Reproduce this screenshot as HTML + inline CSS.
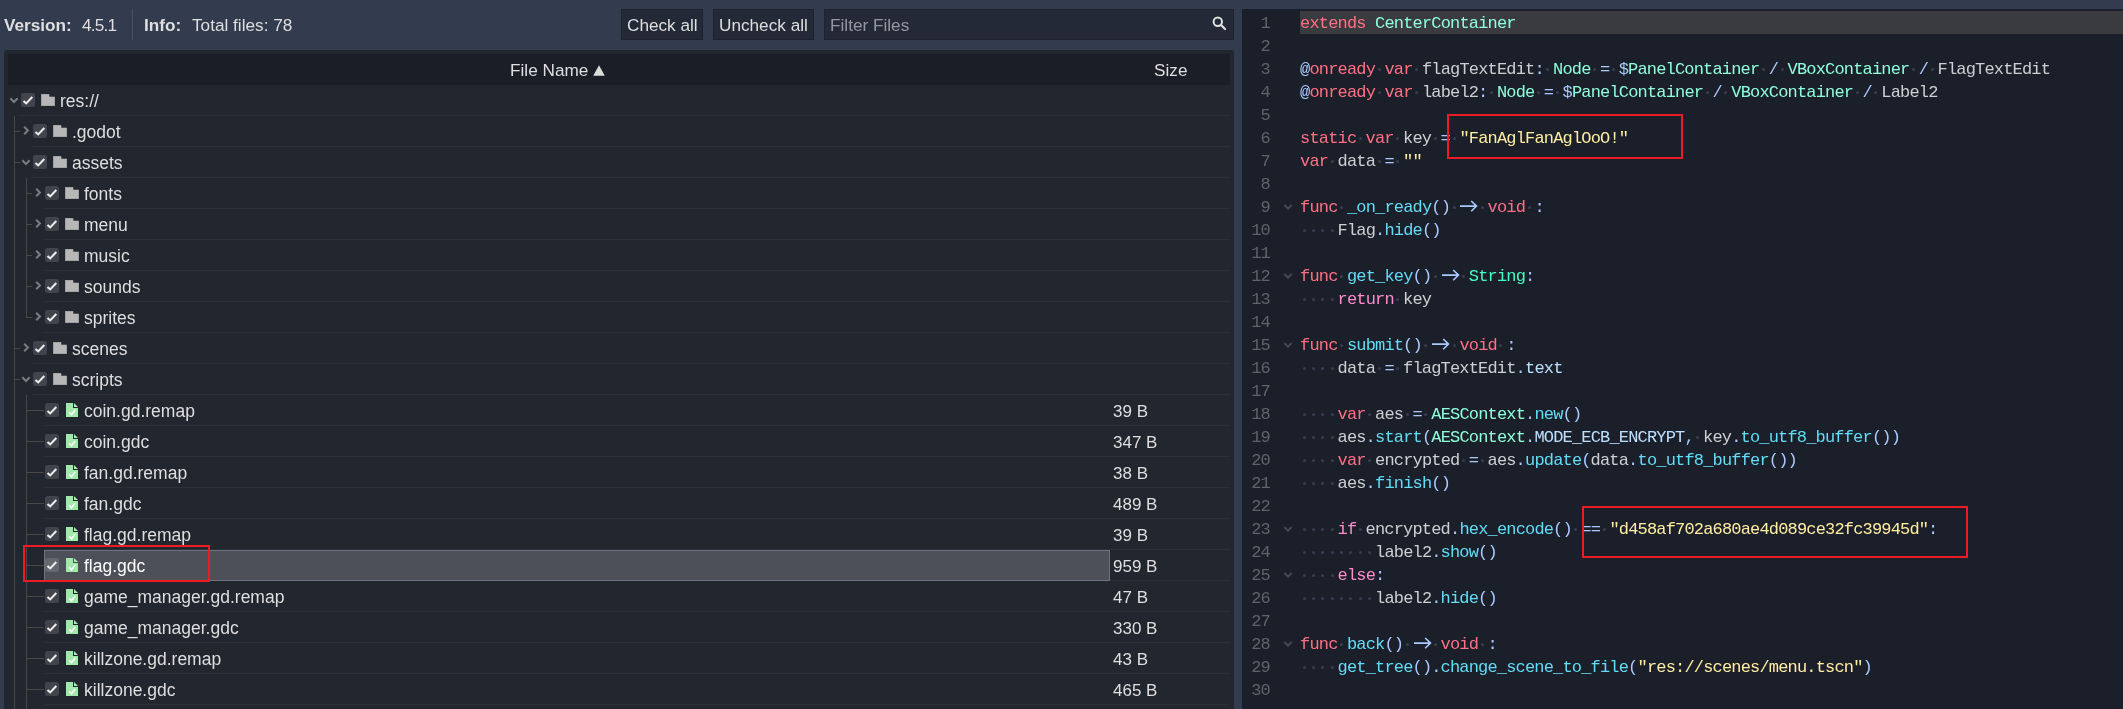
<!DOCTYPE html>
<html><head><meta charset="utf-8">
<style>
html,body{margin:0;padding:0;-webkit-font-smoothing:antialiased;}
body{width:2123px;height:709px;overflow:hidden;position:relative;background:#333b4f;font-family:"Liberation Sans", sans-serif;font-size:17.2px;color:#dfdfdf;}
div,span,svg,i{position:absolute;}
.top{top:5px;height:40px;line-height:40px;white-space:pre;will-change:transform;}
.b{font-weight:bold;}
.btn{top:9px;height:31px;background:#242938;box-sizing:border-box;border:1px solid #1f2330;}
.btn span{position:absolute;top:1px;line-height:29px;white-space:pre;will-change:transform;}
#tree{left:4px;top:50px;width:1230px;height:700px;background:#22262f;border-radius:3px;}
#head{left:8px;top:54px;width:1222px;height:31px;background:#1b1e27;}
.hd{top:55px;line-height:31px;white-space:pre;will-change:transform;}
.sep{height:1px;background:#2b2f37;}
.rl{background:#4a4844;}
.cb{width:14px;height:14px;border-radius:2.5px;background:rgba(255,255,255,0.14);}
.cb svg{left:0;top:0;}
.tt{line-height:31px;white-space:pre;font-size:17.5px;}
.sel-t{color:#fff;}
.sel{left:44px;width:1066px;height:31px;box-sizing:border-box;border:1px solid #6b7383;background:#4d5059;}
.red{box-sizing:border-box;border:2px solid #ed1c24;}
#txt{left:0;top:0;width:2123px;height:709px;will-change:transform;}
#ed{left:1242px;top:9px;width:881px;height:700px;background:#1b1f2a;}
#cur{left:1300px;top:11px;width:823px;height:23px;background:#3a3b3f;}
.ln{left:1240px;width:30px;text-align:right;height:23px;line-height:23px;font-family:"Liberation Mono", monospace;font-size:17px;letter-spacing:-0.826px;color:#5f6269;}
.fold{left:1283px;}
.c{line-height:23px;height:23px;white-space:pre;font-family:"Liberation Mono", monospace;font-size:17px;letter-spacing:-0.826px;}
.d{width:3px;height:3px;background:#363e51;border-radius:1.5px;}
</style></head><body>
<div class="top b" style="left:4px">Version:</div>
<div class="top" style="left:82px;letter-spacing:-0.8px">4.5.1</div>
<div style="left:132px;top:9px;width:1px;height:31px;background:#4a5063"></div>
<div class="top b" style="left:144px">Info:</div>
<div class="top" style="left:192px">Total files: 78</div>
<div class="btn" style="left:621px;width:82px"><span style="left:4.6px">Check all</span></div>
<div class="btn" style="left:713px;width:101px"><span style="left:5px">Uncheck all</span></div>
<div class="btn" style="left:824px;width:410px"><span style="left:5px;color:#95979e">Filter Files</span>
<svg style="left:386px;top:5px" width="16" height="16" viewBox="0 0 16 16"><circle cx="6.8" cy="6.8" r="4.2" fill="none" stroke="#e0e0e0" stroke-width="2"/><path d="M9.8 9.8 L14 14" stroke="#e0e0e0" stroke-width="2.2" stroke-linecap="round"/></svg></div>
<div id="tree"></div>
<div id="head"></div>
<div class="hd" style="left:510px">File Name</div>
<svg style="left:593px;top:65px" width="12" height="11" viewBox="0 0 12 11"><path d="M6 0.3 L11.8 10.8 H0.2 Z" fill="#dcdcdc"/></svg>
<div class="hd" style="left:1154px">Size</div>
<div class="rl" style="left:14px;top:116px;width:1px;height:593px"></div><div class="rl" style="left:26px;top:178px;width:1px;height:140px"></div><div class="rl" style="left:26px;top:395px;width:1px;height:314px"></div><div class="sep" style="left:20px;top:115px;width:1210px"></div><svg class="ico" style="left:9px;top:94px" width="10" height="12" viewBox="0 0 10 12"><path d="M1.3 4.2 L5 7.9 L8.7 4.2" fill="none" stroke="#777b82" stroke-width="2.1"/></svg><div class="cb" style="left:21px;top:93px"><svg width="14" height="14" viewBox="0 0 14 14"><path d="M2.5 7.9 L5.2 10.4 L11.3 4.1" fill="none" stroke="#ececec" stroke-width="2.1"/></svg></div><svg class="ico" style="left:41px;top:94px" width="14" height="12" viewBox="0 0 14 12"><path d="M0.3 0.3 H8 V3 H13.7 V11.7 H0.3 Z" fill="#b7b7b7" stroke="#b7b7b7" stroke-width="0.6" stroke-linejoin="round"/></svg><div class="sep" style="left:32px;top:146px;width:1198px"></div><div class="rl" style="left:14px;top:131px;width:6px;height:1px"></div><svg class="ico" style="left:22px;top:125px" width="8" height="12" viewBox="0 0 8 12"><path d="M2.2 1.8 L5.9 5.5 L2.2 9.2" fill="none" stroke="#777b82" stroke-width="2.1"/></svg><div class="cb" style="left:33px;top:124px"><svg width="14" height="14" viewBox="0 0 14 14"><path d="M2.5 7.9 L5.2 10.4 L11.3 4.1" fill="none" stroke="#ececec" stroke-width="2.1"/></svg></div><svg class="ico" style="left:53px;top:125px" width="14" height="12" viewBox="0 0 14 12"><path d="M0.3 0.3 H8 V3 H13.7 V11.7 H0.3 Z" fill="#b7b7b7" stroke="#b7b7b7" stroke-width="0.6" stroke-linejoin="round"/></svg><div class="sep" style="left:32px;top:177px;width:1198px"></div><div class="rl" style="left:14px;top:162px;width:6px;height:1px"></div><svg class="ico" style="left:21px;top:156px" width="10" height="12" viewBox="0 0 10 12"><path d="M1.3 4.2 L5 7.9 L8.7 4.2" fill="none" stroke="#777b82" stroke-width="2.1"/></svg><div class="cb" style="left:33px;top:155px"><svg width="14" height="14" viewBox="0 0 14 14"><path d="M2.5 7.9 L5.2 10.4 L11.3 4.1" fill="none" stroke="#ececec" stroke-width="2.1"/></svg></div><svg class="ico" style="left:53px;top:156px" width="14" height="12" viewBox="0 0 14 12"><path d="M0.3 0.3 H8 V3 H13.7 V11.7 H0.3 Z" fill="#b7b7b7" stroke="#b7b7b7" stroke-width="0.6" stroke-linejoin="round"/></svg><div class="sep" style="left:44px;top:208px;width:1186px"></div><div class="rl" style="left:26px;top:193px;width:6px;height:1px"></div><svg class="ico" style="left:34px;top:187px" width="8" height="12" viewBox="0 0 8 12"><path d="M2.2 1.8 L5.9 5.5 L2.2 9.2" fill="none" stroke="#777b82" stroke-width="2.1"/></svg><div class="cb" style="left:45px;top:186px"><svg width="14" height="14" viewBox="0 0 14 14"><path d="M2.5 7.9 L5.2 10.4 L11.3 4.1" fill="none" stroke="#ececec" stroke-width="2.1"/></svg></div><svg class="ico" style="left:65px;top:187px" width="14" height="12" viewBox="0 0 14 12"><path d="M0.3 0.3 H8 V3 H13.7 V11.7 H0.3 Z" fill="#b7b7b7" stroke="#b7b7b7" stroke-width="0.6" stroke-linejoin="round"/></svg><div class="sep" style="left:44px;top:239px;width:1186px"></div><div class="rl" style="left:26px;top:224px;width:6px;height:1px"></div><svg class="ico" style="left:34px;top:218px" width="8" height="12" viewBox="0 0 8 12"><path d="M2.2 1.8 L5.9 5.5 L2.2 9.2" fill="none" stroke="#777b82" stroke-width="2.1"/></svg><div class="cb" style="left:45px;top:217px"><svg width="14" height="14" viewBox="0 0 14 14"><path d="M2.5 7.9 L5.2 10.4 L11.3 4.1" fill="none" stroke="#ececec" stroke-width="2.1"/></svg></div><svg class="ico" style="left:65px;top:218px" width="14" height="12" viewBox="0 0 14 12"><path d="M0.3 0.3 H8 V3 H13.7 V11.7 H0.3 Z" fill="#b7b7b7" stroke="#b7b7b7" stroke-width="0.6" stroke-linejoin="round"/></svg><div class="sep" style="left:44px;top:270px;width:1186px"></div><div class="rl" style="left:26px;top:255px;width:6px;height:1px"></div><svg class="ico" style="left:34px;top:249px" width="8" height="12" viewBox="0 0 8 12"><path d="M2.2 1.8 L5.9 5.5 L2.2 9.2" fill="none" stroke="#777b82" stroke-width="2.1"/></svg><div class="cb" style="left:45px;top:248px"><svg width="14" height="14" viewBox="0 0 14 14"><path d="M2.5 7.9 L5.2 10.4 L11.3 4.1" fill="none" stroke="#ececec" stroke-width="2.1"/></svg></div><svg class="ico" style="left:65px;top:249px" width="14" height="12" viewBox="0 0 14 12"><path d="M0.3 0.3 H8 V3 H13.7 V11.7 H0.3 Z" fill="#b7b7b7" stroke="#b7b7b7" stroke-width="0.6" stroke-linejoin="round"/></svg><div class="sep" style="left:44px;top:301px;width:1186px"></div><div class="rl" style="left:26px;top:286px;width:6px;height:1px"></div><svg class="ico" style="left:34px;top:280px" width="8" height="12" viewBox="0 0 8 12"><path d="M2.2 1.8 L5.9 5.5 L2.2 9.2" fill="none" stroke="#777b82" stroke-width="2.1"/></svg><div class="cb" style="left:45px;top:279px"><svg width="14" height="14" viewBox="0 0 14 14"><path d="M2.5 7.9 L5.2 10.4 L11.3 4.1" fill="none" stroke="#ececec" stroke-width="2.1"/></svg></div><svg class="ico" style="left:65px;top:280px" width="14" height="12" viewBox="0 0 14 12"><path d="M0.3 0.3 H8 V3 H13.7 V11.7 H0.3 Z" fill="#b7b7b7" stroke="#b7b7b7" stroke-width="0.6" stroke-linejoin="round"/></svg><div class="sep" style="left:44px;top:332px;width:1186px"></div><div class="rl" style="left:26px;top:317px;width:6px;height:1px"></div><svg class="ico" style="left:34px;top:311px" width="8" height="12" viewBox="0 0 8 12"><path d="M2.2 1.8 L5.9 5.5 L2.2 9.2" fill="none" stroke="#777b82" stroke-width="2.1"/></svg><div class="cb" style="left:45px;top:310px"><svg width="14" height="14" viewBox="0 0 14 14"><path d="M2.5 7.9 L5.2 10.4 L11.3 4.1" fill="none" stroke="#ececec" stroke-width="2.1"/></svg></div><svg class="ico" style="left:65px;top:311px" width="14" height="12" viewBox="0 0 14 12"><path d="M0.3 0.3 H8 V3 H13.7 V11.7 H0.3 Z" fill="#b7b7b7" stroke="#b7b7b7" stroke-width="0.6" stroke-linejoin="round"/></svg><div class="sep" style="left:32px;top:363px;width:1198px"></div><div class="rl" style="left:14px;top:348px;width:6px;height:1px"></div><svg class="ico" style="left:22px;top:342px" width="8" height="12" viewBox="0 0 8 12"><path d="M2.2 1.8 L5.9 5.5 L2.2 9.2" fill="none" stroke="#777b82" stroke-width="2.1"/></svg><div class="cb" style="left:33px;top:341px"><svg width="14" height="14" viewBox="0 0 14 14"><path d="M2.5 7.9 L5.2 10.4 L11.3 4.1" fill="none" stroke="#ececec" stroke-width="2.1"/></svg></div><svg class="ico" style="left:53px;top:342px" width="14" height="12" viewBox="0 0 14 12"><path d="M0.3 0.3 H8 V3 H13.7 V11.7 H0.3 Z" fill="#b7b7b7" stroke="#b7b7b7" stroke-width="0.6" stroke-linejoin="round"/></svg><div class="sep" style="left:32px;top:394px;width:1198px"></div><div class="rl" style="left:14px;top:379px;width:6px;height:1px"></div><svg class="ico" style="left:21px;top:373px" width="10" height="12" viewBox="0 0 10 12"><path d="M1.3 4.2 L5 7.9 L8.7 4.2" fill="none" stroke="#777b82" stroke-width="2.1"/></svg><div class="cb" style="left:33px;top:372px"><svg width="14" height="14" viewBox="0 0 14 14"><path d="M2.5 7.9 L5.2 10.4 L11.3 4.1" fill="none" stroke="#ececec" stroke-width="2.1"/></svg></div><svg class="ico" style="left:53px;top:373px" width="14" height="12" viewBox="0 0 14 12"><path d="M0.3 0.3 H8 V3 H13.7 V11.7 H0.3 Z" fill="#b7b7b7" stroke="#b7b7b7" stroke-width="0.6" stroke-linejoin="round"/></svg><div class="sep" style="left:44px;top:425px;width:1186px"></div><div class="rl" style="left:26px;top:410px;width:18px;height:1px"></div><div class="cb" style="left:45px;top:403px"><svg width="14" height="14" viewBox="0 0 14 14"><path d="M2.5 7.9 L5.2 10.4 L11.3 4.1" fill="none" stroke="#ececec" stroke-width="2.1"/></svg></div><svg class="ico" style="left:66px;top:403px" width="12" height="14" viewBox="0 0 12 14"><path d="M0 0 H7 V5 H12 V14 H0 Z" fill="#9feaaa"/><path d="M8 0 L12 4 H8 Z" fill="#a6eeb1"/><path d="M3.2 9.3 L5.4 11.8 L9.2 7" fill="none" stroke="#fff" stroke-width="1.6"/></svg><div class="sep" style="left:44px;top:456px;width:1186px"></div><div class="rl" style="left:26px;top:441px;width:18px;height:1px"></div><div class="cb" style="left:45px;top:434px"><svg width="14" height="14" viewBox="0 0 14 14"><path d="M2.5 7.9 L5.2 10.4 L11.3 4.1" fill="none" stroke="#ececec" stroke-width="2.1"/></svg></div><svg class="ico" style="left:66px;top:434px" width="12" height="14" viewBox="0 0 12 14"><path d="M0 0 H7 V5 H12 V14 H0 Z" fill="#9feaaa"/><path d="M8 0 L12 4 H8 Z" fill="#a6eeb1"/><path d="M3.2 9.3 L5.4 11.8 L9.2 7" fill="none" stroke="#fff" stroke-width="1.6"/></svg><div class="sep" style="left:44px;top:487px;width:1186px"></div><div class="rl" style="left:26px;top:472px;width:18px;height:1px"></div><div class="cb" style="left:45px;top:465px"><svg width="14" height="14" viewBox="0 0 14 14"><path d="M2.5 7.9 L5.2 10.4 L11.3 4.1" fill="none" stroke="#ececec" stroke-width="2.1"/></svg></div><svg class="ico" style="left:66px;top:465px" width="12" height="14" viewBox="0 0 12 14"><path d="M0 0 H7 V5 H12 V14 H0 Z" fill="#9feaaa"/><path d="M8 0 L12 4 H8 Z" fill="#a6eeb1"/><path d="M3.2 9.3 L5.4 11.8 L9.2 7" fill="none" stroke="#fff" stroke-width="1.6"/></svg><div class="sep" style="left:44px;top:518px;width:1186px"></div><div class="rl" style="left:26px;top:503px;width:18px;height:1px"></div><div class="cb" style="left:45px;top:496px"><svg width="14" height="14" viewBox="0 0 14 14"><path d="M2.5 7.9 L5.2 10.4 L11.3 4.1" fill="none" stroke="#ececec" stroke-width="2.1"/></svg></div><svg class="ico" style="left:66px;top:496px" width="12" height="14" viewBox="0 0 12 14"><path d="M0 0 H7 V5 H12 V14 H0 Z" fill="#9feaaa"/><path d="M8 0 L12 4 H8 Z" fill="#a6eeb1"/><path d="M3.2 9.3 L5.4 11.8 L9.2 7" fill="none" stroke="#fff" stroke-width="1.6"/></svg><div class="sep" style="left:44px;top:549px;width:1186px"></div><div class="rl" style="left:26px;top:534px;width:18px;height:1px"></div><div class="cb" style="left:45px;top:527px"><svg width="14" height="14" viewBox="0 0 14 14"><path d="M2.5 7.9 L5.2 10.4 L11.3 4.1" fill="none" stroke="#ececec" stroke-width="2.1"/></svg></div><svg class="ico" style="left:66px;top:527px" width="12" height="14" viewBox="0 0 12 14"><path d="M0 0 H7 V5 H12 V14 H0 Z" fill="#9feaaa"/><path d="M8 0 L12 4 H8 Z" fill="#a6eeb1"/><path d="M3.2 9.3 L5.4 11.8 L9.2 7" fill="none" stroke="#fff" stroke-width="1.6"/></svg><div class="sep" style="left:44px;top:580px;width:1186px"></div><div class="sel" style="top:550px"></div><div class="rl" style="left:26px;top:565px;width:18px;height:1px"></div><div class="cb" style="left:45px;top:558px"><svg width="14" height="14" viewBox="0 0 14 14"><path d="M2.5 7.9 L5.2 10.4 L11.3 4.1" fill="none" stroke="#ececec" stroke-width="2.1"/></svg></div><svg class="ico" style="left:66px;top:558px" width="12" height="14" viewBox="0 0 12 14"><path d="M0 0 H7 V5 H12 V14 H0 Z" fill="#9feaaa"/><path d="M8 0 L12 4 H8 Z" fill="#a6eeb1"/><path d="M3.2 9.3 L5.4 11.8 L9.2 7" fill="none" stroke="#fff" stroke-width="1.6"/></svg><div class="sep" style="left:44px;top:611px;width:1186px"></div><div class="rl" style="left:26px;top:596px;width:18px;height:1px"></div><div class="cb" style="left:45px;top:589px"><svg width="14" height="14" viewBox="0 0 14 14"><path d="M2.5 7.9 L5.2 10.4 L11.3 4.1" fill="none" stroke="#ececec" stroke-width="2.1"/></svg></div><svg class="ico" style="left:66px;top:589px" width="12" height="14" viewBox="0 0 12 14"><path d="M0 0 H7 V5 H12 V14 H0 Z" fill="#9feaaa"/><path d="M8 0 L12 4 H8 Z" fill="#a6eeb1"/><path d="M3.2 9.3 L5.4 11.8 L9.2 7" fill="none" stroke="#fff" stroke-width="1.6"/></svg><div class="sep" style="left:44px;top:642px;width:1186px"></div><div class="rl" style="left:26px;top:627px;width:18px;height:1px"></div><div class="cb" style="left:45px;top:620px"><svg width="14" height="14" viewBox="0 0 14 14"><path d="M2.5 7.9 L5.2 10.4 L11.3 4.1" fill="none" stroke="#ececec" stroke-width="2.1"/></svg></div><svg class="ico" style="left:66px;top:620px" width="12" height="14" viewBox="0 0 12 14"><path d="M0 0 H7 V5 H12 V14 H0 Z" fill="#9feaaa"/><path d="M8 0 L12 4 H8 Z" fill="#a6eeb1"/><path d="M3.2 9.3 L5.4 11.8 L9.2 7" fill="none" stroke="#fff" stroke-width="1.6"/></svg><div class="sep" style="left:44px;top:673px;width:1186px"></div><div class="rl" style="left:26px;top:658px;width:18px;height:1px"></div><div class="cb" style="left:45px;top:651px"><svg width="14" height="14" viewBox="0 0 14 14"><path d="M2.5 7.9 L5.2 10.4 L11.3 4.1" fill="none" stroke="#ececec" stroke-width="2.1"/></svg></div><svg class="ico" style="left:66px;top:651px" width="12" height="14" viewBox="0 0 12 14"><path d="M0 0 H7 V5 H12 V14 H0 Z" fill="#9feaaa"/><path d="M8 0 L12 4 H8 Z" fill="#a6eeb1"/><path d="M3.2 9.3 L5.4 11.8 L9.2 7" fill="none" stroke="#fff" stroke-width="1.6"/></svg><div class="sep" style="left:44px;top:704px;width:1186px"></div><div class="rl" style="left:26px;top:689px;width:18px;height:1px"></div><div class="cb" style="left:45px;top:682px"><svg width="14" height="14" viewBox="0 0 14 14"><path d="M2.5 7.9 L5.2 10.4 L11.3 4.1" fill="none" stroke="#ececec" stroke-width="2.1"/></svg></div><svg class="ico" style="left:66px;top:682px" width="12" height="14" viewBox="0 0 12 14"><path d="M0 0 H7 V5 H12 V14 H0 Z" fill="#9feaaa"/><path d="M8 0 L12 4 H8 Z" fill="#a6eeb1"/><path d="M3.2 9.3 L5.4 11.8 L9.2 7" fill="none" stroke="#fff" stroke-width="1.6"/></svg><div class="sep" style="left:44px;top:735px;width:1186px"></div><div class="rl" style="left:26px;top:720px;width:18px;height:1px"></div><div class="cb" style="left:45px;top:713px"><svg width="14" height="14" viewBox="0 0 14 14"><path d="M2.5 7.9 L5.2 10.4 L11.3 4.1" fill="none" stroke="#ececec" stroke-width="2.1"/></svg></div><svg class="ico" style="left:66px;top:713px" width="12" height="14" viewBox="0 0 12 14"><path d="M0 0 H7 V5 H12 V14 H0 Z" fill="#9feaaa"/><path d="M8 0 L12 4 H8 Z" fill="#a6eeb1"/><path d="M3.2 9.3 L5.4 11.8 L9.2 7" fill="none" stroke="#fff" stroke-width="1.6"/></svg>
<div class="red" style="left:23px;top:545px;width:187px;height:37px"></div>
<div id="ed"></div>
<div id="cur"></div>
<i class="d" style="left:1368.12px;top:21.6px"></i><i class="d" style="left:1377.50px;top:67.6px"></i><i class="d" style="left:1415.00px;top:67.6px"></i><i class="d" style="left:1546.25px;top:67.6px"></i><i class="d" style="left:1593.12px;top:67.6px"></i><i class="d" style="left:1611.88px;top:67.6px"></i><i class="d" style="left:1761.88px;top:67.6px"></i><i class="d" style="left:1780.62px;top:67.6px"></i><i class="d" style="left:1911.88px;top:67.6px"></i><i class="d" style="left:1930.62px;top:67.6px"></i><i class="d" style="left:1377.50px;top:90.6px"></i><i class="d" style="left:1415.00px;top:90.6px"></i><i class="d" style="left:1490.00px;top:90.6px"></i><i class="d" style="left:1536.88px;top:90.6px"></i><i class="d" style="left:1555.62px;top:90.6px"></i><i class="d" style="left:1705.62px;top:90.6px"></i><i class="d" style="left:1724.38px;top:90.6px"></i><i class="d" style="left:1855.62px;top:90.6px"></i><i class="d" style="left:1874.38px;top:90.6px"></i><i class="d" style="left:1358.75px;top:136.6px"></i><i class="d" style="left:1396.25px;top:136.6px"></i><i class="d" style="left:1433.75px;top:136.6px"></i><i class="d" style="left:1452.50px;top:136.6px"></i><i class="d" style="left:1330.62px;top:159.6px"></i><i class="d" style="left:1377.50px;top:159.6px"></i><i class="d" style="left:1396.25px;top:159.6px"></i><svg class="fold" style="top:203px" width="10" height="8" viewBox="0 0 10 8"><path d="M1.3 2.1 L5 5.6 L8.7 2.1" fill="none" stroke="#434852" stroke-width="2.1"/></svg><i class="d" style="left:1340.00px;top:205.6px"></i><i class="d" style="left:1452.50px;top:205.6px"></i><svg class="arr" style="left:1459.38px;top:195px" width="19" height="23" viewBox="0 0 19 23"><path d="M1 11.1 H17.4 M12.2 6 L17.5 11.1 L12.2 16.3" fill="none" stroke="#abc9ff" stroke-width="1.6"/></svg><i class="d" style="left:1480.62px;top:205.6px"></i><i class="d" style="left:1527.50px;top:205.6px"></i><i class="d" style="left:1302.50px;top:228.6px"></i><i class="d" style="left:1311.88px;top:228.6px"></i><i class="d" style="left:1321.25px;top:228.6px"></i><i class="d" style="left:1330.62px;top:228.6px"></i><svg class="fold" style="top:272px" width="10" height="8" viewBox="0 0 10 8"><path d="M1.3 2.1 L5 5.6 L8.7 2.1" fill="none" stroke="#434852" stroke-width="2.1"/></svg><i class="d" style="left:1340.00px;top:274.6px"></i><i class="d" style="left:1433.75px;top:274.6px"></i><svg class="arr" style="left:1440.62px;top:264px" width="19" height="23" viewBox="0 0 19 23"><path d="M1 11.1 H17.4 M12.2 6 L17.5 11.1 L12.2 16.3" fill="none" stroke="#abc9ff" stroke-width="1.6"/></svg><i class="d" style="left:1461.88px;top:274.6px"></i><i class="d" style="left:1302.50px;top:297.6px"></i><i class="d" style="left:1311.88px;top:297.6px"></i><i class="d" style="left:1321.25px;top:297.6px"></i><i class="d" style="left:1330.62px;top:297.6px"></i><i class="d" style="left:1396.25px;top:297.6px"></i><svg class="fold" style="top:341px" width="10" height="8" viewBox="0 0 10 8"><path d="M1.3 2.1 L5 5.6 L8.7 2.1" fill="none" stroke="#434852" stroke-width="2.1"/></svg><i class="d" style="left:1340.00px;top:343.6px"></i><i class="d" style="left:1424.38px;top:343.6px"></i><svg class="arr" style="left:1431.25px;top:333px" width="19" height="23" viewBox="0 0 19 23"><path d="M1 11.1 H17.4 M12.2 6 L17.5 11.1 L12.2 16.3" fill="none" stroke="#abc9ff" stroke-width="1.6"/></svg><i class="d" style="left:1452.50px;top:343.6px"></i><i class="d" style="left:1499.38px;top:343.6px"></i><i class="d" style="left:1302.50px;top:366.6px"></i><i class="d" style="left:1311.88px;top:366.6px"></i><i class="d" style="left:1321.25px;top:366.6px"></i><i class="d" style="left:1330.62px;top:366.6px"></i><i class="d" style="left:1377.50px;top:366.6px"></i><i class="d" style="left:1396.25px;top:366.6px"></i><i class="d" style="left:1302.50px;top:412.6px"></i><i class="d" style="left:1311.88px;top:412.6px"></i><i class="d" style="left:1321.25px;top:412.6px"></i><i class="d" style="left:1330.62px;top:412.6px"></i><i class="d" style="left:1368.12px;top:412.6px"></i><i class="d" style="left:1405.62px;top:412.6px"></i><i class="d" style="left:1424.38px;top:412.6px"></i><i class="d" style="left:1302.50px;top:435.6px"></i><i class="d" style="left:1311.88px;top:435.6px"></i><i class="d" style="left:1321.25px;top:435.6px"></i><i class="d" style="left:1330.62px;top:435.6px"></i><i class="d" style="left:1696.25px;top:435.6px"></i><i class="d" style="left:1302.50px;top:458.6px"></i><i class="d" style="left:1311.88px;top:458.6px"></i><i class="d" style="left:1321.25px;top:458.6px"></i><i class="d" style="left:1330.62px;top:458.6px"></i><i class="d" style="left:1368.12px;top:458.6px"></i><i class="d" style="left:1461.88px;top:458.6px"></i><i class="d" style="left:1480.62px;top:458.6px"></i><i class="d" style="left:1302.50px;top:481.6px"></i><i class="d" style="left:1311.88px;top:481.6px"></i><i class="d" style="left:1321.25px;top:481.6px"></i><i class="d" style="left:1330.62px;top:481.6px"></i><svg class="fold" style="top:525px" width="10" height="8" viewBox="0 0 10 8"><path d="M1.3 2.1 L5 5.6 L8.7 2.1" fill="none" stroke="#434852" stroke-width="2.1"/></svg><i class="d" style="left:1302.50px;top:527.6px"></i><i class="d" style="left:1311.88px;top:527.6px"></i><i class="d" style="left:1321.25px;top:527.6px"></i><i class="d" style="left:1330.62px;top:527.6px"></i><i class="d" style="left:1358.75px;top:527.6px"></i><i class="d" style="left:1574.38px;top:527.6px"></i><i class="d" style="left:1602.50px;top:527.6px"></i><i class="d" style="left:1302.50px;top:550.6px"></i><i class="d" style="left:1311.88px;top:550.6px"></i><i class="d" style="left:1321.25px;top:550.6px"></i><i class="d" style="left:1330.62px;top:550.6px"></i><i class="d" style="left:1340.00px;top:550.6px"></i><i class="d" style="left:1349.38px;top:550.6px"></i><i class="d" style="left:1358.75px;top:550.6px"></i><i class="d" style="left:1368.12px;top:550.6px"></i><svg class="fold" style="top:571px" width="10" height="8" viewBox="0 0 10 8"><path d="M1.3 2.1 L5 5.6 L8.7 2.1" fill="none" stroke="#434852" stroke-width="2.1"/></svg><i class="d" style="left:1302.50px;top:573.6px"></i><i class="d" style="left:1311.88px;top:573.6px"></i><i class="d" style="left:1321.25px;top:573.6px"></i><i class="d" style="left:1330.62px;top:573.6px"></i><i class="d" style="left:1302.50px;top:596.6px"></i><i class="d" style="left:1311.88px;top:596.6px"></i><i class="d" style="left:1321.25px;top:596.6px"></i><i class="d" style="left:1330.62px;top:596.6px"></i><i class="d" style="left:1340.00px;top:596.6px"></i><i class="d" style="left:1349.38px;top:596.6px"></i><i class="d" style="left:1358.75px;top:596.6px"></i><i class="d" style="left:1368.12px;top:596.6px"></i><svg class="fold" style="top:640px" width="10" height="8" viewBox="0 0 10 8"><path d="M1.3 2.1 L5 5.6 L8.7 2.1" fill="none" stroke="#434852" stroke-width="2.1"/></svg><i class="d" style="left:1340.00px;top:642.6px"></i><i class="d" style="left:1405.62px;top:642.6px"></i><svg class="arr" style="left:1412.50px;top:632px" width="19" height="23" viewBox="0 0 19 23"><path d="M1 11.1 H17.4 M12.2 6 L17.5 11.1 L12.2 16.3" fill="none" stroke="#abc9ff" stroke-width="1.6"/></svg><i class="d" style="left:1433.75px;top:642.6px"></i><i class="d" style="left:1480.62px;top:642.6px"></i><i class="d" style="left:1302.50px;top:665.6px"></i><i class="d" style="left:1311.88px;top:665.6px"></i><i class="d" style="left:1321.25px;top:665.6px"></i><i class="d" style="left:1330.62px;top:665.6px"></i>
<div id="txt"><div class="ln" style="top:12px">1</div><span class="c" style="left:1300.00px;top:12px;color:#ff7085">extends</span><span class="c" style="left:1375.00px;top:12px;color:#8fffdb">CenterContainer</span><div class="ln" style="top:35px">2</div><div class="ln" style="top:58px">3</div><span class="c" style="left:1300.00px;top:58px;color:#abc9ff">@</span><span class="c" style="left:1309.38px;top:58px;color:#ff7085">onready</span><span class="c" style="left:1384.38px;top:58px;color:#ff7085">var</span><span class="c" style="left:1421.88px;top:58px;color:#cdcfd2">flagTextEdit</span><span class="c" style="left:1534.38px;top:58px;color:#abc9ff">:</span><span class="c" style="left:1553.12px;top:58px;color:#8fffdb">Node</span><span class="c" style="left:1600.00px;top:58px;color:#abc9ff">=</span><span class="c" style="left:1618.75px;top:58px;color:#abc9ff">$</span><span class="c" style="left:1628.12px;top:58px;color:#8fffdb">PanelContainer</span><span class="c" style="left:1768.75px;top:58px;color:#abc9ff">/</span><span class="c" style="left:1787.50px;top:58px;color:#8fffdb">VBoxContainer</span><span class="c" style="left:1918.75px;top:58px;color:#abc9ff">/</span><span class="c" style="left:1937.50px;top:58px;color:#cdcfd2">FlagTextEdit</span><div class="ln" style="top:81px">4</div><span class="c" style="left:1300.00px;top:81px;color:#abc9ff">@</span><span class="c" style="left:1309.38px;top:81px;color:#ff7085">onready</span><span class="c" style="left:1384.38px;top:81px;color:#ff7085">var</span><span class="c" style="left:1421.88px;top:81px;color:#cdcfd2">label2</span><span class="c" style="left:1478.12px;top:81px;color:#abc9ff">:</span><span class="c" style="left:1496.88px;top:81px;color:#8fffdb">Node</span><span class="c" style="left:1543.75px;top:81px;color:#abc9ff">=</span><span class="c" style="left:1562.50px;top:81px;color:#abc9ff">$</span><span class="c" style="left:1571.88px;top:81px;color:#8fffdb">PanelContainer</span><span class="c" style="left:1712.50px;top:81px;color:#abc9ff">/</span><span class="c" style="left:1731.25px;top:81px;color:#8fffdb">VBoxContainer</span><span class="c" style="left:1862.50px;top:81px;color:#abc9ff">/</span><span class="c" style="left:1881.25px;top:81px;color:#cdcfd2">Label2</span><div class="ln" style="top:104px">5</div><div class="ln" style="top:127px">6</div><span class="c" style="left:1300.00px;top:127px;color:#ff7085">static</span><span class="c" style="left:1365.62px;top:127px;color:#ff7085">var</span><span class="c" style="left:1403.12px;top:127px;color:#cdcfd2">key</span><span class="c" style="left:1440.62px;top:127px;color:#abc9ff">=</span><span class="c" style="left:1459.38px;top:127px;color:#ffeda1">&quot;FanAglFanAglOoO!&quot;</span><div class="ln" style="top:150px">7</div><span class="c" style="left:1300.00px;top:150px;color:#ff7085">var</span><span class="c" style="left:1337.50px;top:150px;color:#cdcfd2">data</span><span class="c" style="left:1384.38px;top:150px;color:#abc9ff">=</span><span class="c" style="left:1403.12px;top:150px;color:#ffeda1">&quot;&quot;</span><div class="ln" style="top:173px">8</div><div class="ln" style="top:196px">9</div><span class="c" style="left:1300.00px;top:196px;color:#ff7085">func</span><span class="c" style="left:1346.88px;top:196px;color:#63dcf5">_on_ready</span><span class="c" style="left:1431.25px;top:196px;color:#abc9ff">()</span><span class="c" style="left:1487.50px;top:196px;color:#ff7085">void</span><span class="c" style="left:1534.38px;top:196px;color:#abc9ff">:</span><div class="ln" style="top:219px">10</div><span class="c" style="left:1337.50px;top:219px;color:#cdcfd2">Flag</span><span class="c" style="left:1375.00px;top:219px;color:#abc9ff">.</span><span class="c" style="left:1384.38px;top:219px;color:#63dcf5">hide</span><span class="c" style="left:1421.88px;top:219px;color:#abc9ff">()</span><div class="ln" style="top:242px">11</div><div class="ln" style="top:265px">12</div><span class="c" style="left:1300.00px;top:265px;color:#ff7085">func</span><span class="c" style="left:1346.88px;top:265px;color:#63dcf5">get_key</span><span class="c" style="left:1412.50px;top:265px;color:#abc9ff">()</span><span class="c" style="left:1468.75px;top:265px;color:#42ffc2">String</span><span class="c" style="left:1525.00px;top:265px;color:#abc9ff">:</span><div class="ln" style="top:288px">13</div><span class="c" style="left:1337.50px;top:288px;color:#ff8ccc">return</span><span class="c" style="left:1403.12px;top:288px;color:#cdcfd2">key</span><div class="ln" style="top:311px">14</div><div class="ln" style="top:334px">15</div><span class="c" style="left:1300.00px;top:334px;color:#ff7085">func</span><span class="c" style="left:1346.88px;top:334px;color:#63dcf5">submit</span><span class="c" style="left:1403.12px;top:334px;color:#abc9ff">()</span><span class="c" style="left:1459.38px;top:334px;color:#ff7085">void</span><span class="c" style="left:1506.25px;top:334px;color:#abc9ff">:</span><div class="ln" style="top:357px">16</div><span class="c" style="left:1337.50px;top:357px;color:#cdcfd2">data</span><span class="c" style="left:1384.38px;top:357px;color:#abc9ff">=</span><span class="c" style="left:1403.12px;top:357px;color:#cdcfd2">flagTextEdit</span><span class="c" style="left:1515.62px;top:357px;color:#abc9ff">.</span><span class="c" style="left:1525.00px;top:357px;color:#bce0ff">text</span><div class="ln" style="top:380px">17</div><div class="ln" style="top:403px">18</div><span class="c" style="left:1337.50px;top:403px;color:#ff7085">var</span><span class="c" style="left:1375.00px;top:403px;color:#cdcfd2">aes</span><span class="c" style="left:1412.50px;top:403px;color:#abc9ff">=</span><span class="c" style="left:1431.25px;top:403px;color:#8fffdb">AESContext</span><span class="c" style="left:1525.00px;top:403px;color:#abc9ff">.</span><span class="c" style="left:1534.38px;top:403px;color:#63dcf5">new</span><span class="c" style="left:1562.50px;top:403px;color:#abc9ff">()</span><div class="ln" style="top:426px">19</div><span class="c" style="left:1337.50px;top:426px;color:#cdcfd2">aes</span><span class="c" style="left:1365.62px;top:426px;color:#abc9ff">.</span><span class="c" style="left:1375.00px;top:426px;color:#63dcf5">start</span><span class="c" style="left:1421.88px;top:426px;color:#abc9ff">(</span><span class="c" style="left:1431.25px;top:426px;color:#8fffdb">AESContext</span><span class="c" style="left:1525.00px;top:426px;color:#abc9ff">.</span><span class="c" style="left:1534.38px;top:426px;color:#bce0ff">MODE_ECB_ENCRYPT</span><span class="c" style="left:1684.38px;top:426px;color:#abc9ff">,</span><span class="c" style="left:1703.12px;top:426px;color:#cdcfd2">key</span><span class="c" style="left:1731.25px;top:426px;color:#abc9ff">.</span><span class="c" style="left:1740.62px;top:426px;color:#63dcf5">to_utf8_buffer</span><span class="c" style="left:1871.88px;top:426px;color:#abc9ff">())</span><div class="ln" style="top:449px">20</div><span class="c" style="left:1337.50px;top:449px;color:#ff7085">var</span><span class="c" style="left:1375.00px;top:449px;color:#cdcfd2">encrypted</span><span class="c" style="left:1468.75px;top:449px;color:#abc9ff">=</span><span class="c" style="left:1487.50px;top:449px;color:#cdcfd2">aes</span><span class="c" style="left:1515.62px;top:449px;color:#abc9ff">.</span><span class="c" style="left:1525.00px;top:449px;color:#63dcf5">update</span><span class="c" style="left:1581.25px;top:449px;color:#abc9ff">(</span><span class="c" style="left:1590.62px;top:449px;color:#cdcfd2">data</span><span class="c" style="left:1628.12px;top:449px;color:#abc9ff">.</span><span class="c" style="left:1637.50px;top:449px;color:#63dcf5">to_utf8_buffer</span><span class="c" style="left:1768.75px;top:449px;color:#abc9ff">())</span><div class="ln" style="top:472px">21</div><span class="c" style="left:1337.50px;top:472px;color:#cdcfd2">aes</span><span class="c" style="left:1365.62px;top:472px;color:#abc9ff">.</span><span class="c" style="left:1375.00px;top:472px;color:#63dcf5">finish</span><span class="c" style="left:1431.25px;top:472px;color:#abc9ff">()</span><div class="ln" style="top:495px">22</div><div class="ln" style="top:518px">23</div><span class="c" style="left:1337.50px;top:518px;color:#ff8ccc">if</span><span class="c" style="left:1365.62px;top:518px;color:#cdcfd2">encrypted</span><span class="c" style="left:1450.00px;top:518px;color:#abc9ff">.</span><span class="c" style="left:1459.38px;top:518px;color:#63dcf5">hex_encode</span><span class="c" style="left:1553.12px;top:518px;color:#abc9ff">()</span><span class="c" style="left:1581.25px;top:518px;color:#abc9ff">==</span><span class="c" style="left:1609.38px;top:518px;color:#ffeda1">&quot;d458af702a680ae4d089ce32fc39945d&quot;</span><span class="c" style="left:1928.12px;top:518px;color:#abc9ff">:</span><div class="ln" style="top:541px">24</div><span class="c" style="left:1375.00px;top:541px;color:#cdcfd2">label2</span><span class="c" style="left:1431.25px;top:541px;color:#abc9ff">.</span><span class="c" style="left:1440.62px;top:541px;color:#63dcf5">show</span><span class="c" style="left:1478.12px;top:541px;color:#abc9ff">()</span><div class="ln" style="top:564px">25</div><span class="c" style="left:1337.50px;top:564px;color:#ff8ccc">else</span><span class="c" style="left:1375.00px;top:564px;color:#abc9ff">:</span><div class="ln" style="top:587px">26</div><span class="c" style="left:1375.00px;top:587px;color:#cdcfd2">label2</span><span class="c" style="left:1431.25px;top:587px;color:#abc9ff">.</span><span class="c" style="left:1440.62px;top:587px;color:#63dcf5">hide</span><span class="c" style="left:1478.12px;top:587px;color:#abc9ff">()</span><div class="ln" style="top:610px">27</div><div class="ln" style="top:633px">28</div><span class="c" style="left:1300.00px;top:633px;color:#ff7085">func</span><span class="c" style="left:1346.88px;top:633px;color:#63dcf5">back</span><span class="c" style="left:1384.38px;top:633px;color:#abc9ff">()</span><span class="c" style="left:1440.62px;top:633px;color:#ff7085">void</span><span class="c" style="left:1487.50px;top:633px;color:#abc9ff">:</span><div class="ln" style="top:656px">29</div><span class="c" style="left:1337.50px;top:656px;color:#63dcf5">get_tree</span><span class="c" style="left:1412.50px;top:656px;color:#abc9ff">()</span><span class="c" style="left:1431.25px;top:656px;color:#abc9ff">.</span><span class="c" style="left:1440.62px;top:656px;color:#63dcf5">change_scene_to_file</span><span class="c" style="left:1628.12px;top:656px;color:#abc9ff">(</span><span class="c" style="left:1637.50px;top:656px;color:#ffeda1">&quot;res://scenes/menu.tscn&quot;</span><span class="c" style="left:1862.50px;top:656px;color:#abc9ff">)</span><div class="ln" style="top:679px">30</div><div class="tt" style="left:60px;top:86px">res://</div><div class="tt" style="left:72px;top:117px">.godot</div><div class="tt" style="left:72px;top:148px">assets</div><div class="tt" style="left:84px;top:179px">fonts</div><div class="tt" style="left:84px;top:210px">menu</div><div class="tt" style="left:84px;top:241px">music</div><div class="tt" style="left:84px;top:272px">sounds</div><div class="tt" style="left:84px;top:303px">sprites</div><div class="tt" style="left:72px;top:334px">scenes</div><div class="tt" style="left:72px;top:365px">scripts</div><div class="tt" style="left:84px;top:396px">coin.gd.remap</div><div class="tt" style="left:1113px;top:396px;font-size:17px">39 B</div><div class="tt" style="left:84px;top:427px">coin.gdc</div><div class="tt" style="left:1113px;top:427px;font-size:17px">347 B</div><div class="tt" style="left:84px;top:458px">fan.gd.remap</div><div class="tt" style="left:1113px;top:458px;font-size:17px">38 B</div><div class="tt" style="left:84px;top:489px">fan.gdc</div><div class="tt" style="left:1113px;top:489px;font-size:17px">489 B</div><div class="tt" style="left:84px;top:520px">flag.gd.remap</div><div class="tt" style="left:1113px;top:520px;font-size:17px">39 B</div><div class="tt sel-t" style="left:84px;top:551px">flag.gdc</div><div class="tt" style="left:1113px;top:551px;font-size:17px">959 B</div><div class="tt" style="left:84px;top:582px">game_manager.gd.remap</div><div class="tt" style="left:1113px;top:582px;font-size:17px">47 B</div><div class="tt" style="left:84px;top:613px">game_manager.gdc</div><div class="tt" style="left:1113px;top:613px;font-size:17px">330 B</div><div class="tt" style="left:84px;top:644px">killzone.gd.remap</div><div class="tt" style="left:1113px;top:644px;font-size:17px">43 B</div><div class="tt" style="left:84px;top:675px">killzone.gdc</div><div class="tt" style="left:1113px;top:675px;font-size:17px">465 B</div></div>
<div class="red" style="left:1447px;top:114px;width:236px;height:45px"></div>
<div class="red" style="left:1582px;top:506px;width:386px;height:52px"></div>
</body></html>
